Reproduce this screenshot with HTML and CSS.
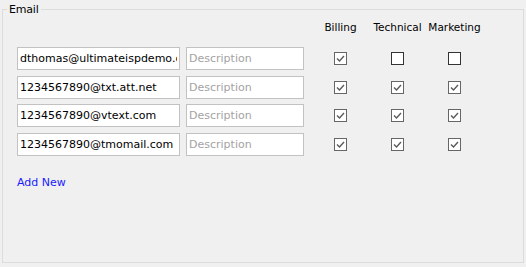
FILE: index.html
```html
<!DOCTYPE html>
<html lang="en">
<head>
    <meta charset="UTF-8">
    <title>Email</title>
    <link rel="stylesheet" href="styles.css">
</head>
<body>
    <fieldset class="group">
        <legend>Email</legend>

        <div class="head-row">
            <span class="spacer"></span>
            <span class="col">Billing</span>
            <span class="col">Technical</span>
            <span class="col">Marketing</span>
        </div>

        <div class="rows">
            <div class="row">
                <input class="email" type="text" value="dthomas@ultimateispdemo.com">
                <input class="desc" type="text" placeholder="Description">
                <span class="col"><span class="box checked"><svg viewBox="0 0 11 11"><path d="M2 5.5 L4.5 8 L9 3"/></svg></span></span>
                <span class="col"><span class="box"></span></span>
                <span class="col"><span class="box"></span></span>
            </div>
            <div class="row">
                <input class="email" type="text" value="1234567890@txt.att.net">
                <input class="desc" type="text" placeholder="Description">
                <span class="col"><span class="box checked"><svg viewBox="0 0 11 11"><path d="M2 5.5 L4.5 8 L9 3"/></svg></span></span>
                <span class="col"><span class="box checked"><svg viewBox="0 0 11 11"><path d="M2 5.5 L4.5 8 L9 3"/></svg></span></span>
                <span class="col"><span class="box checked"><svg viewBox="0 0 11 11"><path d="M2 5.5 L4.5 8 L9 3"/></svg></span></span>
            </div>
            <div class="row">
                <input class="email" type="text" value="1234567890@vtext.com">
                <input class="desc" type="text" placeholder="Description">
                <span class="col"><span class="box checked"><svg viewBox="0 0 11 11"><path d="M2 5.5 L4.5 8 L9 3"/></svg></span></span>
                <span class="col"><span class="box checked"><svg viewBox="0 0 11 11"><path d="M2 5.5 L4.5 8 L9 3"/></svg></span></span>
                <span class="col"><span class="box checked"><svg viewBox="0 0 11 11"><path d="M2 5.5 L4.5 8 L9 3"/></svg></span></span>
            </div>
            <div class="row">
                <input class="email" type="text" value="1234567890@tmomail.com">
                <input class="desc" type="text" placeholder="Description">
                <span class="col"><span class="box checked"><svg viewBox="0 0 11 11"><path d="M2 5.5 L4.5 8 L9 3"/></svg></span></span>
                <span class="col"><span class="box checked"><svg viewBox="0 0 11 11"><path d="M2 5.5 L4.5 8 L9 3"/></svg></span></span>
                <span class="col"><span class="box checked"><svg viewBox="0 0 11 11"><path d="M2 5.5 L4.5 8 L9 3"/></svg></span></span>
            </div>
        </div>

        <a class="add-new" href="#">Add New</a>
    </fieldset>
</body>
</html>
```

FILE: styles.css
```css
html {
    background: #f0f0f0;
}
body {
    margin: 0;
    font-family: "DejaVu Sans", sans-serif;
    font-size: 11px;
    line-height: 13px;
    color: #000;
}
.group {
    box-sizing: border-box;
    margin: 3px 2px 0 2px;
    height: 260px;
    padding: 5px 14px 0 14px;
    border: 1px solid #dcdcdc;
}
.group legend {
    margin-left: -10px;
    padding: 0 2px;
    letter-spacing: -0.2px;
}
.head-row {
    display: flex;
    height: 13px;
    margin-bottom: 13px;
    font-size: 10.5px;
}
.spacer {
    width: 295px;
}
.col {
    width: 57px;
    display: flex;
    justify-content: center;
    align-items: center;
}
.rows {
    display: flex;
    flex-direction: column;
    gap: 5.7px;
}
.row {
    display: flex;
    align-items: center;
    height: 23px;
}
.row input {
    box-sizing: border-box;
    height: 23px;
    margin: 0;
    padding: 0 2px;
    border: 1px solid #c2c2c2;
    background: #fff;
    font-family: "DejaVu Sans", sans-serif;
    font-size: 11px;
    color: #000;
    outline: none;
}
.row input::placeholder {
    color: #a3a3a3;
}
.email {
    width: 163px;
    margin-right: 6px !important;
}
.desc {
    width: 118px;
    margin-right: 8px !important;
}
.box {
    box-sizing: border-box;
    width: 13px;
    height: 13px;
    border: 1px solid #333;
    background: #fff;
    display: flex;
}
.box.checked {
    border-color: #666;
}
.box svg {
    width: 11px;
    height: 11px;
    fill: none;
    stroke: #5a5a5a;
    stroke-width: 1.4;
}
.add-new {
    display: inline-block;
    margin-top: 20px;
    color: #1a1aff;
    text-decoration: none;
}
```
